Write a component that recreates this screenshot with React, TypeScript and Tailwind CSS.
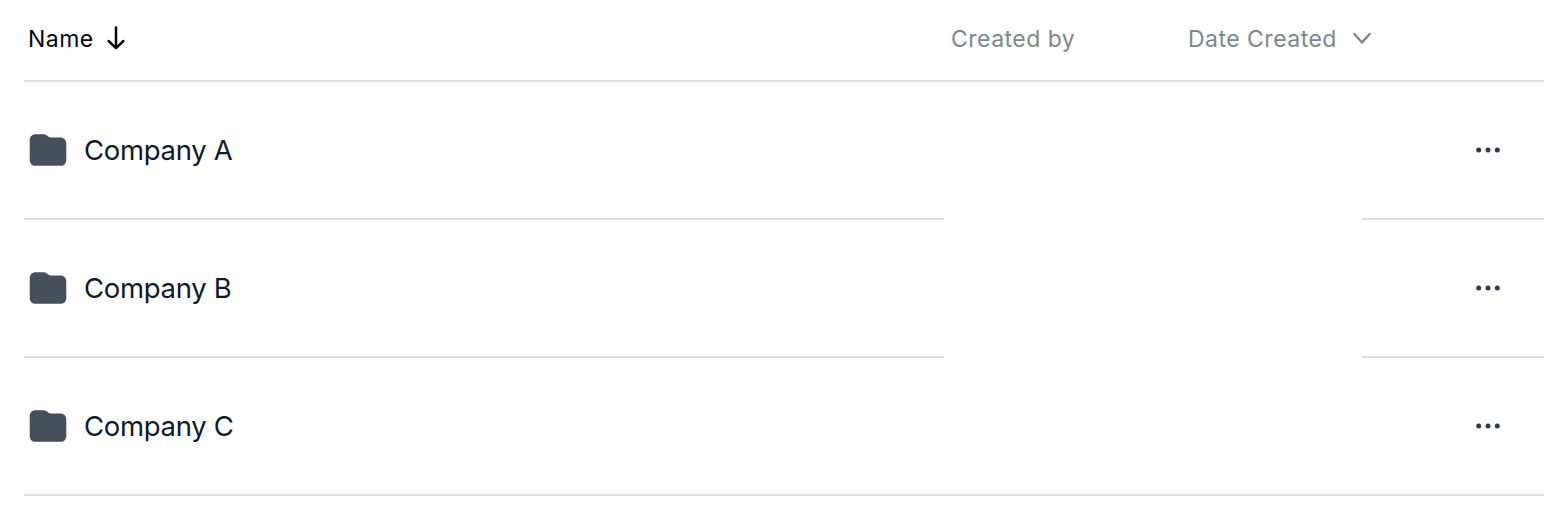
import React from 'react';

interface Company {
  id: number;
  name: string;
}

const companies: Company[] = [
  { id: 1, name: 'Company A' },
  { id: 2, name: 'Company B' },
  { id: 3, name: 'Company C' },
];

const ArrowDownIcon = () => (
  <svg className="w-[24px] h-[28px] shrink-0" viewBox="0 0 24 28" fill="none" stroke="currentColor">
    <path strokeLinecap="round" strokeLinejoin="round" strokeWidth="2.5" d="M12 2.5V23M4.6 16l7.4 7.2 7.4-7.2" />
  </svg>
);

const ChevronDownIcon = () => (
  <svg className="w-[24px] h-[24px] shrink-0" viewBox="0 0 24 24" fill="none" stroke="currentColor">
    <path strokeLinecap="round" strokeLinejoin="round" strokeWidth="2.4" d="M4.4 7l7.6 8.5L19.6 7" />
  </svg>
);

const FolderIcon = () => (
  <svg className="w-[38px] h-[32px] shrink-0 text-[#46505c]" viewBox="0 0 38 32" fill="currentColor">
    <path d="M0.7 7C0.7 2.5 2.8 0.3 7 0.3h6.3c2.1 0 3.7.4 5 1.5l1.2.9c.7.5 1.4.7 2.4.7H31c4.2 0 6.3 2.3 6.3 6.6v15.2c0 4.3-2.1 6.6-6.3 6.6H7c-4.2 0-6.3-2.3-6.3-6.6z" />
  </svg>
);

const MoreIcon = () => (
  <svg className="w-[24px] h-[6px]" viewBox="0 0 24 6" fill="currentColor">
    <circle cx="2.7" cy="3" r="2.5" />
    <circle cx="12" cy="3" r="2.5" />
    <circle cx="21.3" cy="3" r="2.5" />
  </svg>
);

const CompanyRow: React.FC<{ company: Company; last: boolean }> = ({ company, last }) => (
  <div className="grid grid-cols-[920px_418px_182px] h-[138px]">
    <div className="flex items-center border-b-2 border-[#dfdfe3] pl-[5px]">
      <FolderIcon />
      <span className="ml-[17px] pt-px text-[27.5px] leading-none tracking-[-0.3px] text-[#0f1a2a]">{company.name}</span>
    </div>
    <div className={last ? 'border-b-2 border-[#dfdfe3]' : ''} />
    <div className="flex items-center border-b-2 border-[#dfdfe3] pl-[114px]">
      <button className="text-[#2d3a4d]" aria-label="More options">
        <MoreIcon />
      </button>
    </div>
  </div>
);

const App: React.FC = () => {
  return (
    <div className="w-[1568px] h-[516px] bg-white px-6 overflow-hidden font-['Inter',sans-serif]">
      <div className="grid grid-cols-[920px_237px_363px] h-[82px] pb-[3px] border-b-2 border-[#dfdfe3] text-[23px] leading-none tracking-[0.48px] text-[#7f868e]">
        <div className="flex items-center pl-1 text-[#05070d]">
          <span className="pt-[2px]">Name</span>
          <span className="ml-[10px]">
            <ArrowDownIcon />
          </span>
        </div>
        <div className="flex items-center pl-[7px] pt-[2px]">Created by</div>
        <div className="flex items-center pl-[7px]">
          <span className="pt-[2px]">Date Created</span>
          <span className="ml-[13px]">
            <ChevronDownIcon />
          </span>
        </div>
      </div>
      {companies.map((company, index) => (
        <CompanyRow key={company.id} company={company} last={index === companies.length - 1} />
      ))}
    </div>
  );
};

export default App;
